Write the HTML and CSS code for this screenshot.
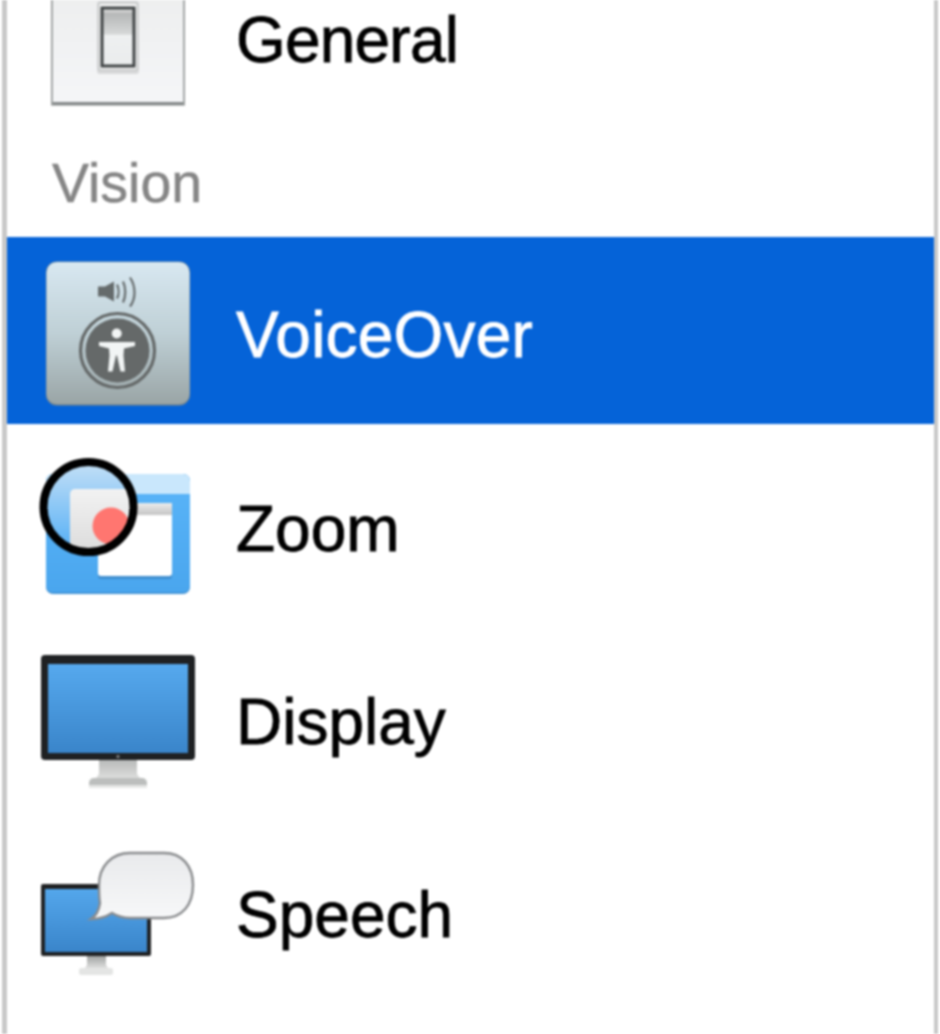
FILE: index.html
```html
<!DOCTYPE html>
<html lang="en">
<head>
<meta charset="utf-8">
<title>Accessibility</title>
<link rel="stylesheet" href="styles.css">
</head>
<body>
<main class="pane">
  <div class="row row-general">
    <svg class="icon" width="170" height="170" viewBox="33 -45 170 170">
      <defs>
        <linearGradient id="plate" x1="0" y1="0" x2="0" y2="1"><stop offset="0" stop-color="#eceded"/><stop offset="1" stop-color="#f5f6f8"/></linearGradient>
        <linearGradient id="rocker" x1="0" y1="0" x2="0" y2="1"><stop offset="0" stop-color="#f0f0f0"/><stop offset=".1" stop-color="#b6b8b8"/><stop offset=".45" stop-color="#d6d8d8"/><stop offset=".47" stop-color="#eef0f1"/><stop offset="1" stop-color="#eaecec"/></linearGradient>
      </defs>
      <rect x="51" y="-25" width="134" height="130" fill="url(#plate)"/>
      <rect x="51" y="102" width="134" height="3.500" fill="#858989"/>
      <rect x="51" y="-25" width="1.800" height="130" fill="#9a9d9d"/>
      <rect x="183.200" y="-25" width="1.800" height="130" fill="#9a9d9d"/>
      <rect x="97" y="1" width="42" height="73" rx="3" fill="#d8d9da"/>
      <rect x="98.500" y="3" width="39" height="67" rx="2" fill="#f8f8f8" stroke="#c4c6c6" stroke-width="1.500"/>
      <rect x="102" y="8" width="32" height="58" fill="url(#rocker)" stroke="#3f4344" stroke-width="3"/>
    </svg>
    <span class="label label-tight">General</span>
  </div>

  <div class="section">Vision</div>

  <div class="row row-selected">
    <svg class="icon" width="170" height="170" viewBox="33 245.500 170 170">
      <defs>
        <linearGradient id="vo" x1="0" y1="0" x2="0" y2="1"><stop offset="0" stop-color="#d8e8f1"/><stop offset=".5" stop-color="#bfd0d6"/><stop offset="1" stop-color="#9aa5a6"/></linearGradient>
      </defs>
      <rect x="46" y="261" width="144" height="144" rx="11" fill="#7f8a8c"/>
      <rect x="46.500" y="261.500" width="143" height="142" rx="10.500" fill="url(#vo)"/>
      <path d="M98 286h7l9-5v20l-9-5h-7z" fill="#656b6c"/>
      <g fill="none" stroke="#656b6c" stroke-width="2.200">
        <path d="M117 284c2 4 2 10 0 14"/>
        <path d="M123 281c3 6 3 15 0 21"/>
        <path d="M130 277c6 9 6 21 0 29"/>
      </g>
      <circle cx="117.500" cy="350" r="37" fill="none" stroke="#646868" stroke-width="3.200"/>
      <circle cx="117.500" cy="350" r="32" fill="#656969"/>
      <circle cx="116.700" cy="333" r="5" fill="#f2f5f5"/>
      <path d="M99 341.500h36v4l-11 2.500-.5 7 1.500 16h-4.500l-3.500-16h-1l-3.500 16h-4.500l1.500-16-.5-7-10-2.500z" fill="#f2f5f5"/>
    </svg>
    <span class="label label-low">VoiceOver</span>
  </div>

  <div class="row">
    <svg class="icon" width="170" height="170" viewBox="33 443 170 170">
      <defs>
        <linearGradient id="zbody" x1="0" y1="0" x2="0" y2="1"><stop offset="0" stop-color="#5ab5f9"/><stop offset="1" stop-color="#4aa6ee"/></linearGradient>
        <linearGradient id="lens" x1="0" y1="0" x2="0" y2="1"><stop offset="0" stop-color="#c4e0f6"/><stop offset="1" stop-color="#52aef6"/></linearGradient>
        <linearGradient id="lwin" x1="0" y1="0" x2="0" y2="1"><stop offset="0" stop-color="#f2f2f2"/><stop offset="1" stop-color="#d6d6d6"/></linearGradient>
        <linearGradient id="ztitle" x1="0" y1="0" x2="0" y2="1"><stop offset="0" stop-color="#ececec"/><stop offset="1" stop-color="#c4c4c4"/></linearGradient>
        <clipPath id="lensclip"><circle cx="88.500" cy="506" r="45"/></clipPath>
      </defs>
      <rect x="46" y="473" width="144" height="120" rx="7" fill="#3f8fd0"/>
      <rect x="46" y="473" width="144" height="118.500" rx="7" fill="url(#zbody)"/>
      <path d="M46 493v-13a7 7 0 0 1 7-7h130a7 7 0 0 1 7 7v13z" fill="#c9e7fc"/>
      <rect x="98" y="503" width="74" height="75" rx="3" fill="#3f8ed0"/>
      <rect x="98" y="502" width="74" height="73" rx="3" fill="#fff"/>
      <rect x="98" y="502" width="74" height="12" fill="url(#ztitle)"/>
      <g clip-path="url(#lensclip)">
        <circle cx="88.500" cy="506" r="45" fill="url(#lens)"/>
        <rect x="70" y="488" width="80" height="80" rx="5" fill="url(#lwin)"/>
        <circle cx="111" cy="525" r="18.500" fill="#ff7670"/>
      </g>
      <circle cx="88.500" cy="506" r="45" fill="none" stroke="#000" stroke-width="8"/>
    </svg>
    <span class="label">Zoom</span>
  </div>

  <div class="row">
    <svg class="icon" width="170" height="170" viewBox="33 637 170 170">
      <defs>
        <linearGradient id="screen" x1="0" y1="0" x2="0" y2="1"><stop offset="0" stop-color="#56a9ee"/><stop offset="1" stop-color="#3a85ca"/></linearGradient>
        <linearGradient id="stand" x1="0" y1="0" x2="0" y2="1"><stop offset="0" stop-color="#b8bab9"/><stop offset="1" stop-color="#dcdddc"/></linearGradient>
      </defs>
      <path d="M99 760h38v14l3 4h-44l3-4z" fill="url(#stand)"/>
      <path d="M93 778h50q4 1 4 5v3h-58v-3q0-4 4-5z" fill="#bcbebd"/>
      <rect x="89" y="785" width="58" height="3" fill="#e6e7e6"/>
      <rect x="41" y="655" width="154" height="105" rx="4" fill="#1f2123"/>
      <rect x="48" y="664" width="140" height="89" fill="url(#screen)"/>
      <circle cx="118" cy="756.500" r="1.500" fill="#8e9092"/>
    </svg>
    <span class="label">Display</span>
  </div>

  <div class="row">
    <svg class="icon" width="170" height="170" viewBox="33 830 170 170">
      <defs>
        <linearGradient id="bubble" x1="0" y1="0" x2="0" y2="1"><stop offset="0" stop-color="#e9eaec"/><stop offset="1" stop-color="#f7f8f9"/></linearGradient>
        <linearGradient id="screen2" x1="0" y1="0" x2="0" y2="1"><stop offset="0" stop-color="#54a7ec"/><stop offset="1" stop-color="#3a85ca"/></linearGradient>
        <linearGradient id="stand2" x1="0" y1="0" x2="0" y2="1"><stop offset="0" stop-color="#a0a2a1"/><stop offset="1" stop-color="#dedfde"/></linearGradient>
      </defs>
      <path d="M87 956h19v9l2 3h-23l2-3z" fill="url(#stand2)"/>
      <rect x="79" y="968" width="34" height="7" rx="2" fill="#e4e5e4"/>
      <rect x="41" y="884" width="110" height="72" rx="2" fill="#1f2123"/>
      <rect x="45" y="889" width="102" height="63" fill="url(#screen2)"/>
      <path d="M130 853h34c18 0 29 13 29 32 0 20-11 33-29 33h-34c-8 0-13-2-18-5-6 4-12 6-21 6 5-3 8-9 9-16-1-5-1-12-1-18 0-19 13-32 31-32z" fill="url(#bubble)" stroke="#8a8c8e" stroke-width="2.400"/>
    </svg>
    <span class="label">Speech</span>
  </div>
</main>
</body>
</html>
```

FILE: styles.css
```css
html, body {
  margin: 0;
  padding: 0;
  background: #fff;
  overflow: hidden;
}

.pane {
  box-sizing: border-box;
  width: 936px;
  height: 1034px;
  margin-left: 2px;
  border-left: 5px solid #c8c8c8;
  border-right: 4px solid #c8c8c8;
  overflow: hidden;
  font-family: "Liberation Sans", Arial, sans-serif;
  color: #000;
  filter: blur(0.8px);
}

.row {
  display: flex;
  align-items: center;
  height: 193px;
  padding-left: 26px;
  gap: 33px;
}

.row-general {
  margin-top: -57px;
}

.row-selected {
  height: 187px;
  margin-bottom: 8px;
  background: #0563d8;
  color: #fff;
}

.icon {
  flex: none;
  display: block;
}

.label {
  font-size: 64px;
  line-height: 1;
  -webkit-text-stroke: 0.8px currentColor;
}

.label-tight {
  letter-spacing: -0.8px;
}

.label-low {
  margin-top: 8px;
  letter-spacing: 0.2px;
}

.section {
  box-sizing: border-box;
  height: 101px;
  padding-left: 45px;
  padding-top: 15px;
  font-size: 55.5px;
  line-height: 64px;
  color: #858585;
  -webkit-text-stroke: 0.5px currentColor;
}
```
